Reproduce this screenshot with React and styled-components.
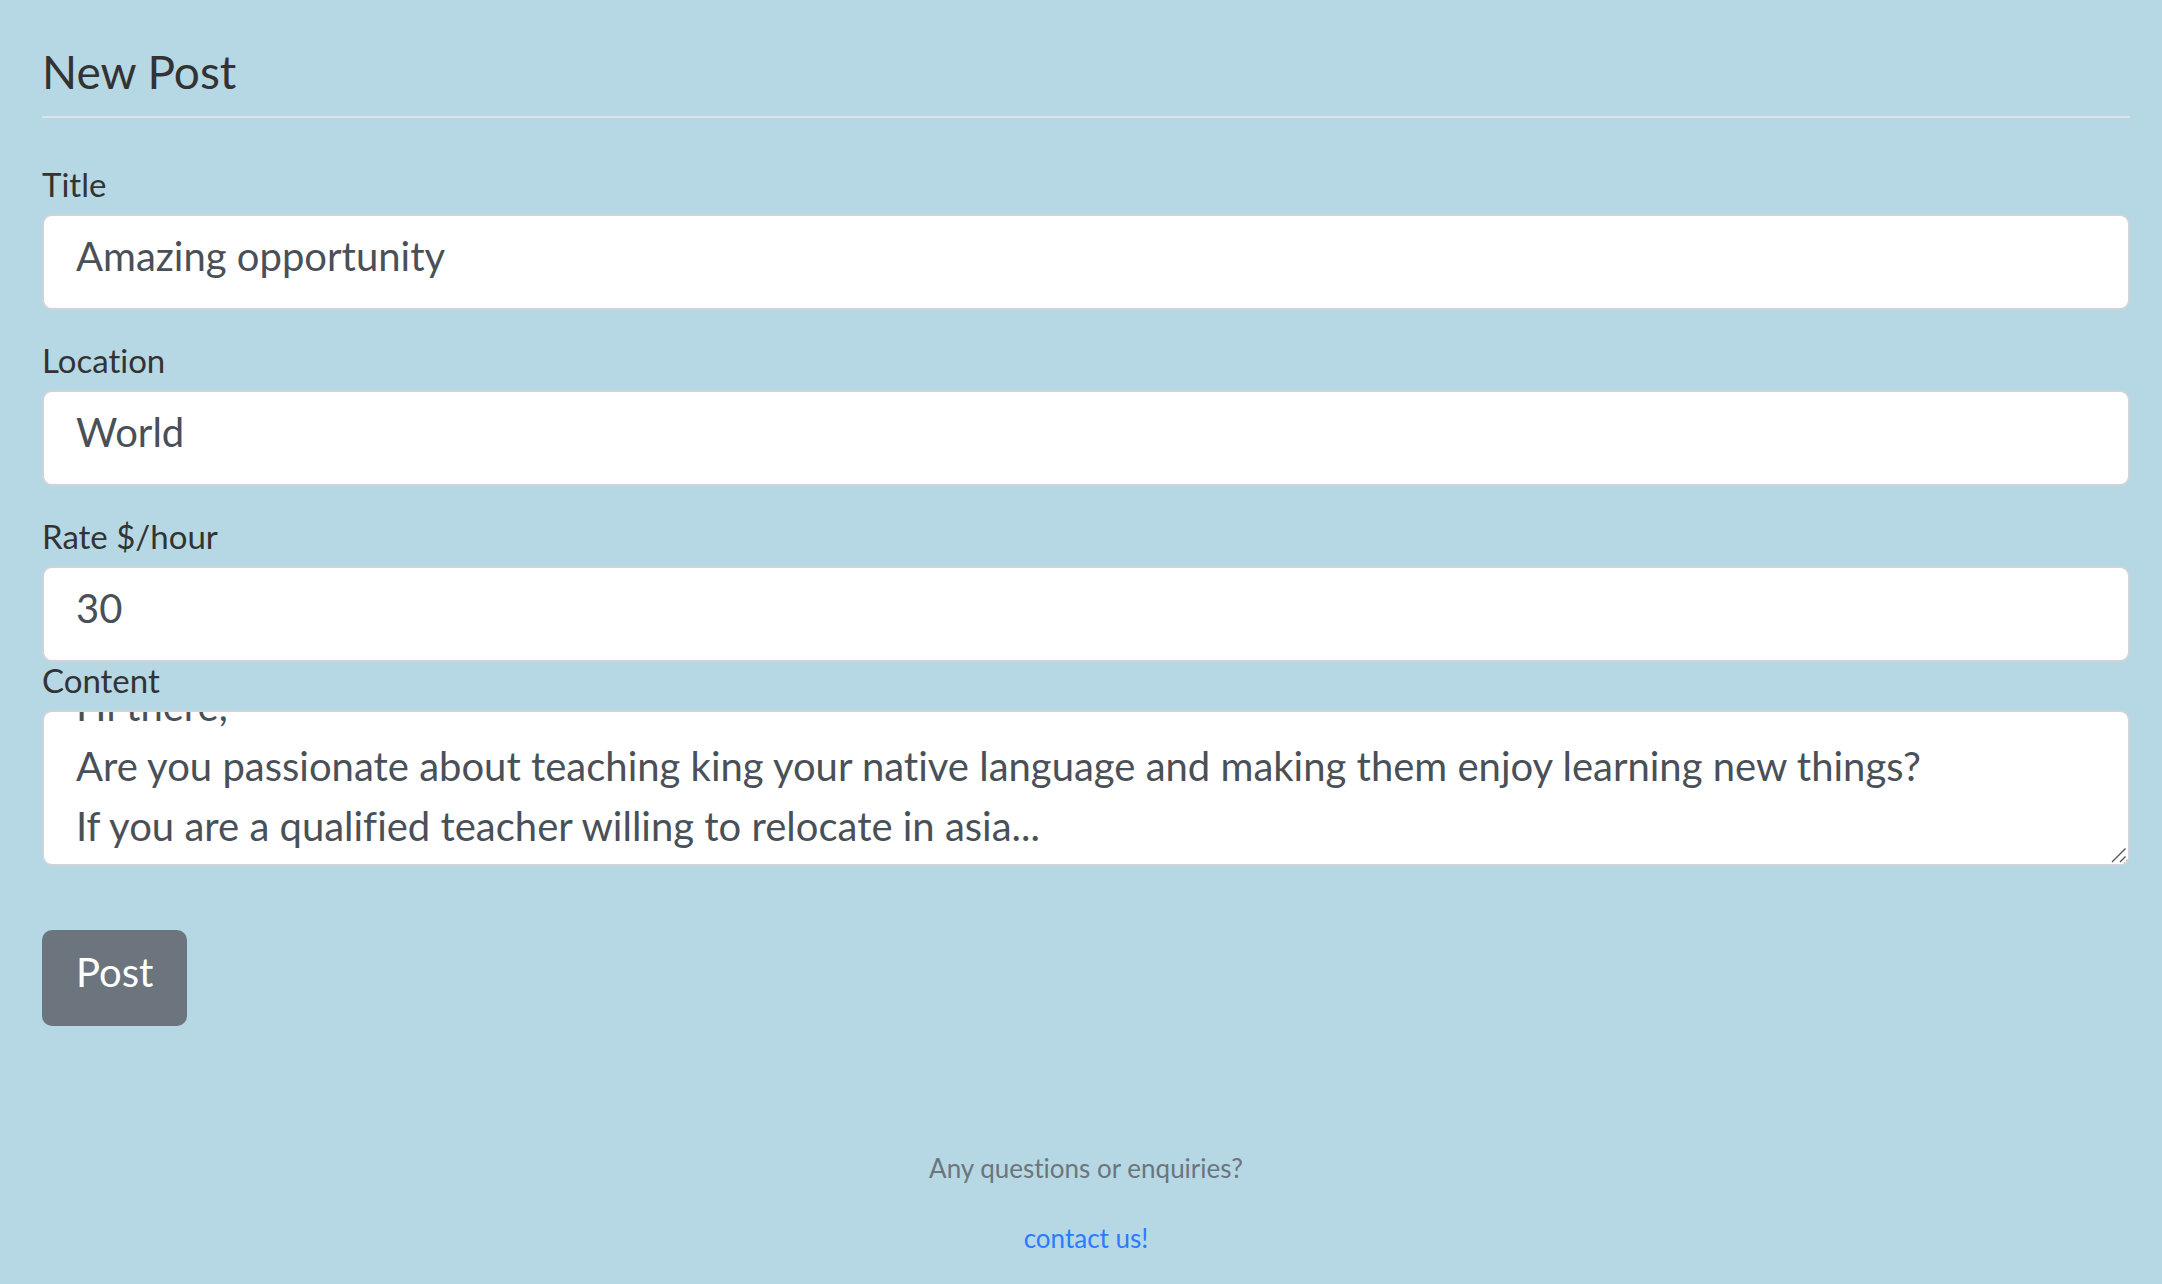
import React, { useLayoutEffect, useRef } from "react";
import styled, { createGlobalStyle, css } from "styled-components";

const GlobalStyle = createGlobalStyle`
  *, *::before, *::after { box-sizing: border-box; }
  body {
    margin: 0;
    background: #b6d8e4;
    color: #333333;
    font-family: Papyrus, Lato, sans-serif;
    font-size: 32px;
    font-variant-ligatures: none;
  }
`;

const Page = styled.main`
  padding: 48px 32px 28px 42px;
`;

const Form = styled.form`
  display: flex;
  flex-direction: column;
`;

const Fieldset = styled.fieldset`
  display: flex;
  flex-direction: column;
  min-width: 0;
  margin: 0;
  padding: 0;
  border: 0;
`;

const Legend = styled.legend`
  width: 100%;
  margin-bottom: 48px;
  padding: 0 0 20px;
  border-bottom: 2px solid #dee2e6;
  font-size: 46px;
  line-height: 48px;
`;

const Group = styled.div`
  display: flex;
  flex-direction: column;
  margin-bottom: ${({ $flush }) => ($flush ? "0" : "32px")};
`;

const Label = styled.label`
  align-self: flex-start;
  margin-bottom: 12px;
  font-size: 33px;
  line-height: 36px;
`;

const control = css`
  width: 100%;
  border: 2px solid #ced4da;
  border-radius: 10px;
  outline: 0;
  background: #ffffff;
  color: #495057;
  font-family: inherit;
  font-size: 40px;
  font-variant-ligatures: none;
`;

const Input = styled.input`
  ${control}
  height: 96px;
  padding: 0 32px 12px;
`;

const TextAreaWrap = styled.div`
  position: relative;
`;

const TextArea = styled.textarea`
  ${control}
  display: block;
  height: 156px;
  padding: 16px 32px 8px;
  line-height: 60px;
  resize: vertical;
  scrollbar-width: none;
`;

const ResizeGrip = styled.svg`
  position: absolute;
  right: 2px;
  bottom: 2px;
  width: 18px;
  height: 18px;
  border-bottom-right-radius: 8px;
  background: #ffffff;
  pointer-events: none;
`;

const SubmitButton = styled.button`
  align-self: flex-start;
  margin-top: 64px;
  padding: 12px 34px 24px;
  border: 0;
  border-radius: 10px;
  background: #6c757d;
  color: #ffffff;
  font-family: inherit;
  font-size: 40px;
  line-height: 60px;
  cursor: pointer;
`;

const Footer = styled.footer`
  display: flex;
  flex-direction: column;
  align-items: center;
  gap: 32px;
  margin-top: 123px;
  color: #6c757d;
  font-size: 26px;
  line-height: 38px;
`;

const Question = styled.p`
  margin: 0;
`;

const ContactLink = styled.a`
  color: #2a7bff;
  text-decoration: none;
`;

const fields = [
  { id: "title", label: "Title", value: "Amazing opportunity" },
  { id: "location", label: "Location", value: "World" },
  { id: "rate", label: "Rate $/hour", value: "30", flush: true },
];

const content = `Hi there,
Are you passionate about teaching king your native language and making them enjoy learning new things?
If you are a qualified teacher willing to relocate in asia...`;

export default function App() {
  const contentRef = useRef(null);

  useLayoutEffect(() => {
    contentRef.current.scrollTop = contentRef.current.scrollHeight;
  }, []);

  return (
    <>
      <GlobalStyle />
      <Page>
        <Form onSubmit={(event) => event.preventDefault()}>
          <Fieldset>
            <Legend>New Post</Legend>
            {fields.map(({ id, label, value, flush }) => (
              <Group key={id} $flush={flush}>
                <Label htmlFor={id}>{label}</Label>
                <Input id={id} name={id} type="text" defaultValue={value} spellCheck={false} />
              </Group>
            ))}
            <Group $flush>
              <Label htmlFor="content">Content</Label>
              <TextAreaWrap>
                <TextArea
                  id="content"
                  name="content"
                  ref={contentRef}
                  defaultValue={content}
                  spellCheck={false}
                />
                <ResizeGrip viewBox="0 0 18 18" aria-hidden="true">
                  <path
                    d="M2 16 15.5 2.5M10 16l5.5-5.5"
                    fill="none"
                    stroke="#555555"
                    strokeWidth="1.4"
                  />
                </ResizeGrip>
              </TextAreaWrap>
            </Group>
          </Fieldset>
          <SubmitButton type="submit">Post</SubmitButton>
        </Form>
        <Footer>
          <Question>Any questions or enquiries?</Question>
          <ContactLink href="#contact">contact us!</ContactLink>
        </Footer>
      </Page>
    </>
  );
}
